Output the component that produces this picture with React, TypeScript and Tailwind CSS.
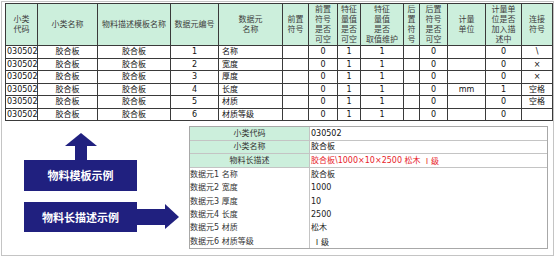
import React from "react";

const headers: string[][] = [
  ["小类", "代码"],
  ["小类名称"],
  ["物料描述模板名称"],
  ["数据元编号"],
  ["数据元", "名称"],
  ["前置", "符号"],
  ["前置", "符号", "是否", "可空"],
  ["特征", "量值", "是否", "可空"],
  ["特征", "量值", "是否", "取值维护"],
  ["后", "置", "符", "号"],
  ["后置", "符号", "是否", "可空"],
  ["计量", "单位"],
  ["计量单", "位是否", "加入描", "述中"],
  ["连接", "符号"],
];

const rows: string[][] = [
  ["030502", "胶合板", "胶合板", "1", "名称", "", "0", "1", "1", "", "0", "", "0", "\\"],
  ["030502", "胶合板", "胶合板", "2", "宽度", "", "0", "1", "1", "", "0", "", "0", "×"],
  ["030502", "胶合板", "胶合板", "3", "厚度", "", "0", "1", "1", "", "0", "", "0", "×"],
  ["030502", "胶合板", "胶合板", "4", "长度", "", "0", "1", "1", "", "0", "mm", "1", "空格"],
  ["030502", "胶合板", "胶合板", "5", "材质", "", "0", "1", "1", "", "0", "", "0", "空格"],
  ["030502", "胶合板", "胶合板", "6", "材质等级", "", "0", "1", "1", "", "0", "", "0", ""],
];

const details: [string, React.ReactNode][] = [
  ["数据元1 名称", "胶合板"],
  ["数据元2 宽度", "1000"],
  ["数据元3 厚度", "10"],
  ["数据元4 长度", "2500"],
  ["数据元5 材质", "松木"],
  [
    "数据元6 材质等级",
    <span className="font-['Noto_Sans_CJK_SC',sans-serif] pl-[2px]">Ⅰ级</span>,
  ],
];

function cellAlign(ci: number) {
  if (ci === 0) return "justify-start pl-[1px]";
  if (ci === 4) return "justify-start pl-[3px]";
  return "justify-center";
}

export default function App() {
  return (
    <div className="w-[554px] h-[257px] bg-white overflow-hidden font-['DejaVu_Sans','Noto_Sans_CJK_SC',sans-serif] text-[8px]">
      <div className="ml-[1px] mt-[1px] w-[553px] h-[255px] border border-[#c4c4c4] flex flex-col">
        {/* top table */}
        <div className="ml-[3px] mt-[1px] w-[548px] border-l border-t border-[#3a3a3a] grid grid-cols-[32px_60px_73px_48px_64px_26px_29px_23px_43px_16px_28px_38px_36px_31px]">
          {headers.map((h, i) => (
            <div
              key={"h" + i}
              className="h-[42px] border-r border-b border-[#3a3a3a] bg-[#ccefdc] flex flex-col items-center justify-center text-[#3d3d3d] leading-[10px] whitespace-nowrap"
            >
              {h.map((l, j) => (
                <span key={j}>{l}</span>
              ))}
            </div>
          ))}
          {rows.map((r, ri) =>
            r.map((c, ci) => (
              <div
                key={ri + "-" + ci}
                className={
                  (ri % 2 === 0 ? "h-[13px] " : "h-[12px] ") +
                  "border-r border-b border-[#3a3a3a] flex items-center whitespace-nowrap leading-none text-[#111] " +
                  cellAlign(ci)
                }
              >
                {c}
              </div>
            ))
          )}
        </div>

        {/* bottom section */}
        <div className="flex flex-row">
          <div className="w-[187px] pl-[22px] flex flex-col">
            <div className="mt-[12px] flex flex-col">
              <svg width="113" height="27" viewBox="0 0 113 27" className="block">
                <polygon points="57,0 41,13 73,13" fill="#20207f" />
                <rect x="51" y="13" width="12" height="14" fill="#20207f" />
              </svg>
              <div className="w-[113px] h-[31px] bg-[#20207f] flex items-center justify-center text-white font-bold text-[11px] font-['Noto_Sans_CJK_SC',sans-serif]">
                物料模板示例
              </div>
            </div>
            <div className="mt-[11px] flex flex-row">
              <div className="w-[113px] h-[30px] bg-[#20207f] flex items-center justify-center text-white font-bold text-[11px] font-['Noto_Sans_CJK_SC',sans-serif]">
                物料长描述示例
              </div>
              <svg width="42" height="30" viewBox="0 0 42 30" className="block">
                <rect x="0" y="7" width="28" height="16" fill="#20207f" />
                <polygon points="28,2 42,15 28,27" fill="#20207f" />
              </svg>
            </div>
          </div>

          <div className="mt-[5px] w-[359px] h-[123px] border border-[#a8a8a8] flex flex-col">
            {[
              ["小类代码", <>030502</>, "h-[14px]", "text-[#111]"],
              ["小类名称", <>胶合板</>, "h-[13px]", "text-[#111]"],
              [
                "物料长描述",
                <>
                  胶合板\1000×10×2500 松木{" "}
                  <span className="font-['Noto_Sans_CJK_SC',sans-serif]">Ⅰ级</span>
                </>,
                "h-[14px]",
                "text-[#e8232a]",
              ],
            ].map(([a, b, h, col], i) => (
              <div key={"g" + i} className={"grid grid-cols-[120px_1fr] border-b border-[#c4c4c4] " + h}>
                <div className="bg-[#ccefdc] border-r border-[#c4c4c4] flex items-center justify-center text-[#333] leading-none">
                  {a}
                </div>
                <div className={"flex items-center pl-[1px] leading-none whitespace-pre " + col}>{b}</div>
              </div>
            ))}
            {details.map(([a, b], i) => (
              <div
                key={"d" + i}
                className={"grid grid-cols-[120px_1fr] " + (i === 1 || i === 4 ? "h-[14px]" : "h-[13px]")}
              >
                <div className="border-r border-[#c4c4c4] flex items-center text-[#333] leading-none whitespace-nowrap">
                  {a}
                </div>
                <div className="flex items-center pl-[1px] text-[#222] leading-none whitespace-nowrap">{b}</div>
              </div>
            ))}
          </div>
        </div>
      </div>
    </div>
  );
}
